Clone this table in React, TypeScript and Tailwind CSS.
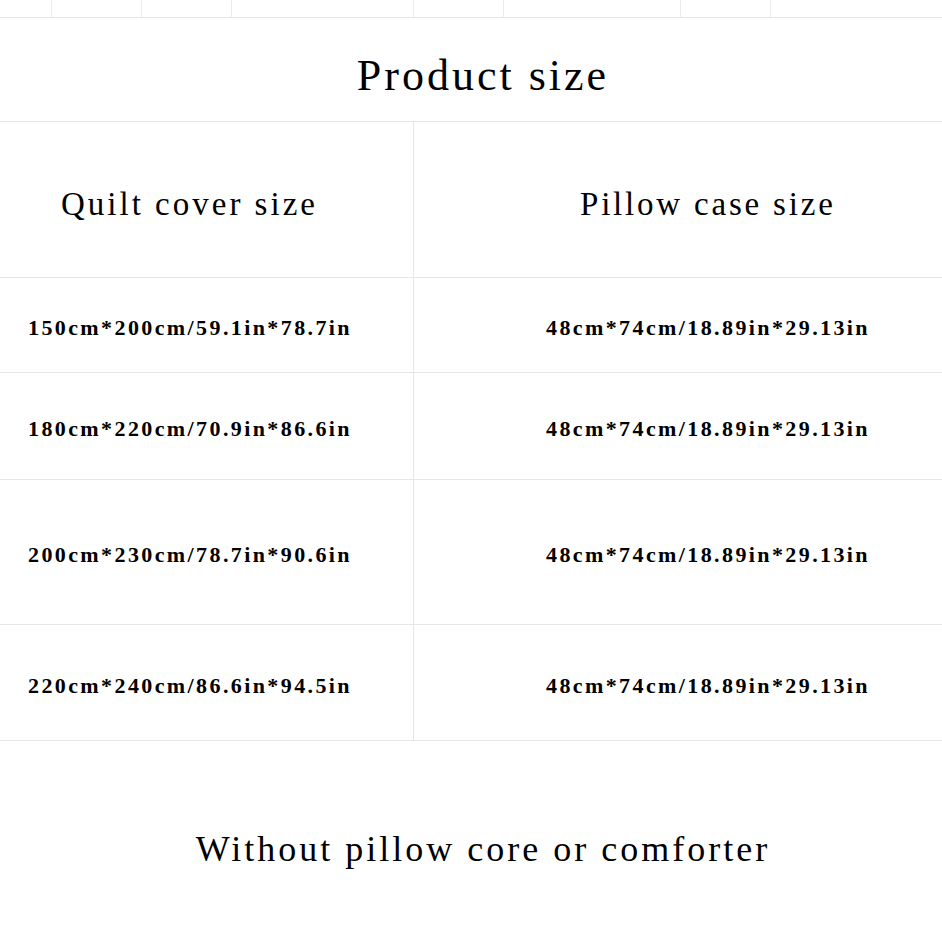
const font = { fontFamily: '"Liberation Serif", "Noto Sans CJK SC", serif' };

const rows = [
  { quilt: "150cm*200cm/59.1in*78.7in", pillow: "48cm*74cm/18.89in*29.13in", h: "h-[95px]" },
  { quilt: "180cm*220cm/70.9in*86.6in", pillow: "48cm*74cm/18.89in*29.13in", h: "h-[107px]" },
  { quilt: "200cm*230cm/78.7in*90.6in", pillow: "48cm*74cm/18.89in*29.13in", h: "h-[145px]" },
  { quilt: "220cm*240cm/86.6in*94.5in", pillow: "48cm*74cm/18.89in*29.13in", h: "h-[116px]" },
];

const stripCells = ["w-[52px]", "w-[90px]", "w-[90px]", "w-[182px]", "w-[90px]", "w-[177px]", "w-[90px]", "flex-1"];

export default function App() {
  return (
    <div className="w-[942px] h-[942px] bg-white text-black overflow-hidden" style={font}>
      {/* leftover grid strip at the very top */}
      <div className="flex h-[18px] border-b border-[#e6e6e6]">
        {stripCells.map((w, i) => (
          <div key={i} className={`${w} ${i < stripCells.length - 1 ? "border-r border-[#ececec]" : ""}`} />
        ))}
      </div>

      {/* title */}
      <div className="h-[104px] border-b border-[#e6e6e6] flex items-center justify-center pt-[12px] pl-[24px]">
        <span className="text-[44px] tracking-[3px] leading-none">Product size</span>
      </div>

      {/* table */}
      <div className="grid grid-cols-[414px_1fr]">
        <div className="h-[156px] border-b border-r border-[#e6e6e6] flex items-center pl-[61px] pt-[10px]">
          <span className="text-[33px] tracking-[3px] leading-none">Quilt cover size</span>
        </div>
        <div className="h-[156px] border-b border-[#e6e6e6] flex items-center pl-[166px] pt-[10px]">
          <span className="text-[33px] tracking-[2.8px] leading-none">Pillow case size</span>
        </div>

        {rows.map((r, i) => (
          <Row key={i} {...r} />
        ))}
      </div>

      {/* note */}
      <div className="h-[201px] flex items-center justify-center pt-[15px] pl-[24px]">
        <span className="text-[36px] tracking-[3px] leading-none">Without pillow core or comforter</span>
      </div>
    </div>
  );
}

function Row({ quilt, pillow, h }: { quilt: string; pillow: string; h: string }) {
  return (
    <>
      <div className={`${h} border-b border-r border-[#e6e6e6] flex items-center pl-[28px] pt-[6px]`}>
        <span className="text-[22px] tracking-[2.4px] font-bold leading-none">{quilt}</span>
      </div>
      <div className={`${h} border-b border-[#e6e6e6] flex items-center pl-[132px] pt-[6px]`}>
        <span className="text-[22px] tracking-[2.4px] font-bold leading-none">{pillow}</span>
      </div>
    </>
  );
}
